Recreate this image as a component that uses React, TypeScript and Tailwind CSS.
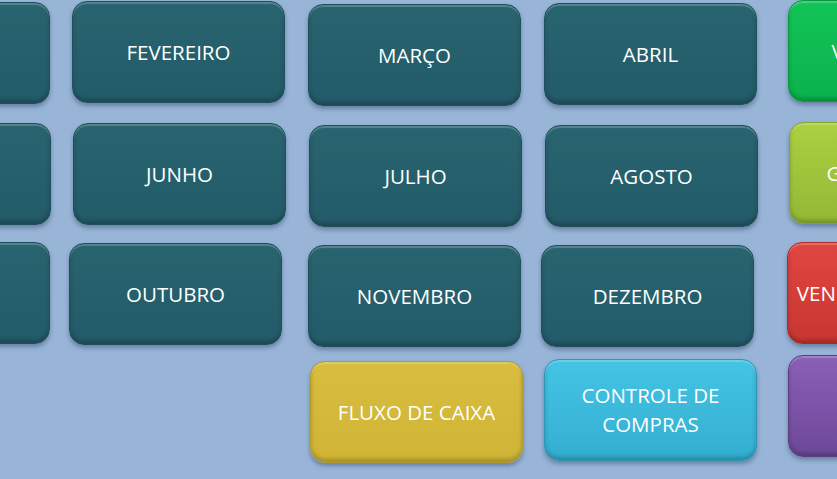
import React from "react";

type Tone = "teal" | "green" | "lime" | "red" | "purple" | "yellow" | "cyan";

interface Tile {
  label: string[];
  tone: Tone;
  pos: string; // margin offsets inside the row
}

const toneClass: Record<Tone, string> = {
  teal: "bg-gradient-to-b from-[#28646f] to-[#235b69] border-[#1d4f5c]",
  green: "bg-gradient-to-b from-[#12c458] to-[#0bb24c] border-[#0a9a41]",
  lime: "bg-gradient-to-b from-[#abd040] to-[#94b836] border-[#83a52e]",
  red: "bg-gradient-to-b from-[#e04640] to-[#c83632] border-[#a92c29]",
  purple: "bg-gradient-to-b from-[#8b5fb8] to-[#6d4898] border-[#5c3d82]",
  yellow: "bg-gradient-to-b from-[#d8bd3e] to-[#cfb436] border-[#b39a2c]",
  cyan: "bg-gradient-to-b from-[#44c4e6] to-[#33aed0] border-[#2c98b6]",
};

const rows: { height: string; tiles: Tile[] }[] = [
  {
    height: "h-[122px]",
    tiles: [
      { label: ["JANEIRO"], tone: "teal", pos: "ml-[-163px] mt-[2px]" },
      { label: ["FEVEREIRO"], tone: "teal", pos: "ml-[22px] mt-[1px]" },
      { label: ["MARÇO"], tone: "teal", pos: "ml-[23px] mt-[4px]" },
      { label: ["ABRIL"], tone: "teal", pos: "ml-[23px] mt-[3px]" },
      { label: ["VISÃO GERAL"], tone: "green", pos: "ml-[31px] mt-0" },
    ],
  },
  {
    height: "h-[120px]",
    tiles: [
      { label: ["MAIO"], tone: "teal", pos: "ml-[-162px] mt-[1px]" },
      { label: ["JUNHO"], tone: "teal", pos: "ml-[22px] mt-[1px]" },
      { label: ["JULHO"], tone: "teal", pos: "ml-[23px] mt-[3px]" },
      { label: ["AGOSTO"], tone: "teal", pos: "ml-[23px] mt-[3px]" },
      { label: ["GASTOS FIXOS"], tone: "lime", pos: "ml-[31px] mt-0" },
    ],
  },
  {
    height: "h-[113px]",
    tiles: [
      { label: ["SETEMBRO"], tone: "teal", pos: "ml-[-163px] mt-0" },
      { label: ["OUTUBRO"], tone: "teal", pos: "ml-[19px] mt-[1px]" },
      { label: ["NOVEMBRO"], tone: "teal", pos: "ml-[26px] mt-[3px]" },
      { label: ["DEZEMBRO"], tone: "teal", pos: "ml-[20px] mt-[3px]" },
      { label: ["VENDAS POR MESES"], tone: "red", pos: "ml-[33px] mt-0" },
    ],
  },
  {
    height: "h-[124px]",
    tiles: [
      { label: ["FLUXO DE CAIXA"], tone: "yellow", pos: "ml-[310px] mt-[6px]" },
      { label: ["CONTROLE DE", "COMPRAS"], tone: "cyan", pos: "ml-[21px] mt-[4px]" },
      { label: ["METAS"], tone: "purple", pos: "ml-[31px] mt-0" },
    ],
  },
];

function TileButton({ tile }: { tile: Tile }) {
  return (
    <button
      className={`${tile.pos} ${toneClass[tile.tone]} shrink-0 w-[213px] h-[102px] rounded-[15px] border flex flex-col items-center justify-center text-white text-[20.5px] leading-[29px] shadow-[0_3px_4px_rgba(20,40,70,0.35),inset_0_2px_1px_rgba(255,255,255,0.22),inset_0_-3px_4px_rgba(0,0,0,0.22)]`}
    >
      {tile.label.map((line) => (
        <span key={line} className="whitespace-nowrap">
          {line}
        </span>
      ))}
    </button>
  );
}

export default function App() {
  return (
    <div
      className="w-[837px] h-[479px] overflow-hidden bg-[#98b4d7] flex flex-col"
      style={{ fontFamily: '"Open Sans", "Noto Sans", sans-serif' }}
    >
      {rows.map((row, i) => (
        <div key={i} className={`${row.height} shrink-0 flex items-start`}>
          {row.tiles.map((tile) => (
            <TileButton key={tile.label.join(" ")} tile={tile} />
          ))}
        </div>
      ))}
    </div>
  );
}
